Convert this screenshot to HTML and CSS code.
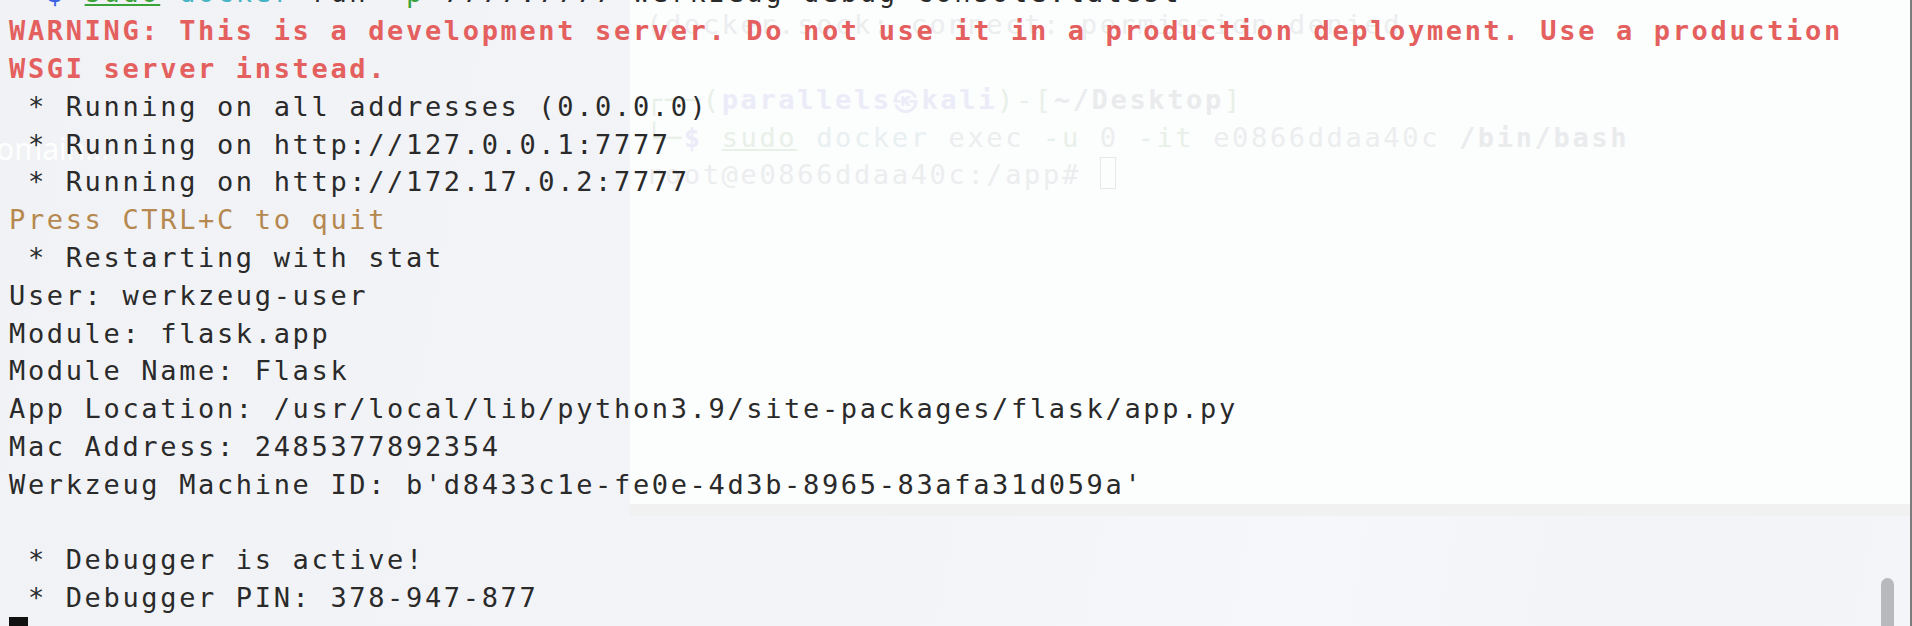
FILE: index.html
```html
<!DOCTYPE html>
<html>
<head>
<meta charset="utf-8">
<link rel="stylesheet" href="styles.css">
</head>
<body>
<div class="screen">
  <div class="backwin">
    <div class="bg-line">(docker.sock: connect: permission denied</div>
    <div class="bg-line">&nbsp;</div>
    <div class="bg-line"><span class="bg-g">┌──(</span><span class="bg-b">parallels㉿kali</span><span class="bg-g">)-[</span><span class="bg-k">~/Desktop</span><span class="bg-g">]</span></div>
    <div class="bg-line"><span class="bg-g">└─</span><span class="bg-b">$</span> <span class="bg-g bg-u">sudo</span> <span class="bg-c">docker</span> exec <span class="bg-g">-u</span> 0 <span class="bg-g">-it</span> e0866ddaa40c <span class="bg-k">/bin/bash</span></div>
    <div class="bg-line">root@e0866ddaa40c:/app# <span class="bg-cursor"></span></div>
  </div>
  <div class="band"></div>
  <div class="ghost">omain...</div>

  <div class="term">
    <div class="line"><span class="p-g">└─</span><span class="p-b">$</span> <span class="c-sudo">sudo</span> <span class="c-cmd">docker</span> run <span class="c-opt">-p</span> 7777:7777 werkzeug-debug-console:latest</div>
    <div class="line warn">WARNING: This is a development server. Do not use it in a production deployment. Use a production</div>
    <div class="line warn">WSGI server instead.</div>
    <div class="line"> * Running on all addresses (0.0.0.0)</div>
    <div class="line"> * Running on http://127.0.0.1:7777</div>
    <div class="line"> * Running on http://172.17.0.2:7777</div>
    <div class="line quit">Press CTRL+C to quit</div>
    <div class="line"> * Restarting with stat</div>
    <div class="line">User: werkzeug-user</div>
    <div class="line">Module: flask.app</div>
    <div class="line">Module Name: Flask</div>
    <div class="line">App Location: /usr/local/lib/python3.9/site-packages/flask/app.py</div>
    <div class="line">Mac Address: 2485377892354</div>
    <div class="line">Werkzeug Machine ID: b'd8433c1e-fe0e-4d3b-8965-83afa31d059a'</div>
    <div class="line">&nbsp;</div>
    <div class="line"> * Debugger is active!</div>
    <div class="line"> * Debugger PIN: 378-947-877</div>
    <div class="cursor"></div>
  </div>

  <div class="scrollbar"></div>
  <div class="edge"></div>
</div>
</body>
</html>
```

FILE: styles.css
```css
html, body {
  margin: 0;
  padding: 0;
}

body {
  width: 1912px;
  height: 626px;
  overflow: hidden;
  background: #f2f3f6;
}

.screen {
  position: relative;
  width: 1912px;
  height: 626px;
  overflow: hidden;
  background:
    linear-gradient(100deg, #f1f2f5 0%, #f3f4f7 45%, #f5f7fa 70%, #f3f4f8 85%, #f4f5f9 100%);
}

/* window of the desktop showing through the transparent terminal */
.backwin {
  position: absolute;
  left: 630px;
  top: 0;
  width: 1282px;
  height: 504px;
  background: #fcfdfd;
  box-sizing: border-box;
  padding-left: 16px;
  padding-top: 6px;
  font-family: "DejaVu Sans Mono", monospace;
  font-size: 27px;
  letter-spacing: 2.65px;
  line-height: 37.5px;
  color: #ecedef;
}

.bg-line {
  white-space: pre;
  height: 37.5px;
}

.bg-g { color: #e8f0e8; }
.bg-b { color: #ebecf8; font-weight: bold; }
.bg-k { color: #eaebed; font-weight: bold; }
.bg-c { color: #e8f0f2; }
.bg-u { text-decoration: underline; }

.bg-cursor {
  display: inline-block;
  width: 14px;
  height: 30px;
  border: 1px solid #e6e7e9;
  vertical-align: -5px;
}

.band {
  position: absolute;
  left: 630px;
  top: 504px;
  width: 1282px;
  height: 12px;
  background: #f2f1f1;
}

.ghost {
  position: absolute;
  left: -4px;
  top: 128px;
  font-family: "Noto Sans", sans-serif;
  font-size: 30px;
  color: rgba(255, 255, 255, 0.95);
}

/* foreground terminal */
.term {
  position: relative;
  margin-top: -25.6px;
  padding-left: 9px;
  font-family: "DejaVu Sans Mono", monospace;
  font-size: 27px;
  letter-spacing: 2.65px;
  line-height: 37.8px;
  color: #2a2a2a;
}

.line {
  white-space: pre;
  height: 37.8px;
}

.warn {
  color: #e4605f;
  font-weight: bold;
}

.quit {
  color: #b5884f;
}

.p-g { color: #3b9a3b; }
.p-b { color: #3d63e6; font-weight: bold; }

.c-sudo {
  color: #3aa33a;
  text-decoration: underline;
}

.c-cmd { color: #45b4c4; }
.c-opt { color: #3aa33a; }

.cursor {
  width: 19px;
  height: 30px;
  background: #111;
}

.scrollbar {
  position: absolute;
  left: 1881px;
  top: 578px;
  width: 13px;
  height: 70px;
  border-radius: 7px;
  background: #b8b9bc;
}

.edge {
  position: absolute;
  right: 0;
  top: 0;
  width: 2px;
  height: 626px;
  background: #7c7c7c;
}
```
